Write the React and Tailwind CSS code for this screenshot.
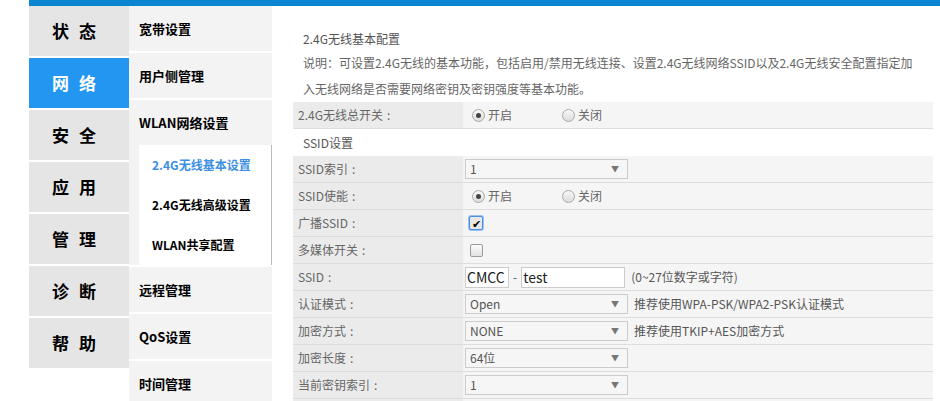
import React from "react";

const navItems = ["状态", "网络", "安全", "应用", "管理", "诊断", "帮助"];

const Radio = ({ checked }) => (
  <span className="w-[13px] h-[13px] rounded-full border border-[#a9a9a9] bg-gradient-to-b from-[#f8f8f8] to-[#dcdcdc] flex items-center justify-center">
    {checked && <span className="w-[5px] h-[5px] rounded-full bg-[#444]" />}
  </span>
);

const RadioPair = () => (
  <div className="flex items-center">
    <div className="flex items-center ml-[7px] w-[90px]">
      <Radio checked />
      <span className="ml-[3px]">开启</span>
    </div>
    <div className="flex items-center">
      <Radio />
      <span className="ml-[3px]">关闭</span>
    </div>
  </div>
);

const Select = ({ value, arrow = true }) => (
  <div className="w-[163px] h-[20px] border border-[#cccccc] bg-[#f6f6f6] flex items-center justify-between pl-[4px] pr-[8px] text-[#555]">
    <span>{value}</span>
    {arrow && <span className="text-[8px] text-[#777]">▼</span>}
  </div>
);

const Row = ({ label, children }) => (
  <div className="flex h-[27px] border-b border-[#dddddd]">
    <div className="w-[170px] bg-[#ebebeb] pl-[5px] flex items-center">
      {label && (
        <>
          <span>{label}</span>
          <span className="ml-[4px]">:</span>
        </>
      )}
    </div>
    <div className="flex-1 bg-[#f5f5f5] flex items-center pl-[2px]">{children}</div>
  </div>
);

export default function App() {
  return (
    <div className="w-[940px] h-[401px] overflow-hidden bg-white text-[12px]" style={{ fontFamily: '"Noto Sans CJK SC", "Noto Sans", sans-serif' }}>
      <div className="ml-[29px] h-[6px] bg-[#0986cf]" />
      <div className="flex">
        {/* left nav */}
        <div className="ml-[29px] w-[100px] flex flex-col gap-[2px]">
          {navItems.map((n) => (
            <div
              key={n}
              className={`h-[50px] flex items-center gap-[10px] pl-[23px] text-[17px] font-bold ${n === "网络" ? "bg-[#2296f1] text-white" : "bg-[#e5e5e5] text-black"}`}
            >
              <span>{n[0]}</span>
              <span>{n[1]}</span>
            </div>
          ))}
        </div>

        {/* second column */}
        <div className="w-[143px] flex flex-col gap-[2px] text-[13px] font-bold text-black">
          <div className="h-[45px] bg-[#f3f3f3] flex items-center pl-[10px]">宽带设置</div>
          <div className="h-[45px] bg-[#f3f3f3] flex items-center pl-[10px]">用户侧管理</div>
          <div className="bg-[#f3f3f3]">
            <div className="h-[45px] flex items-center pl-[10px]">WLAN网络设置</div>
            <div className="ml-[10px] h-[120px] bg-white border-r border-[#bbbbbb] flex flex-col text-[12px]">
              <div className="h-[40px] flex items-center pl-[13px] text-[#3d8fe0]">2.4G无线基本设置</div>
              <div className="h-[40px] flex items-center pl-[13px]">2.4G无线高级设置</div>
              <div className="h-[40px] flex items-center pl-[13px]">WLAN共享配置</div>
            </div>
          </div>
          <div className="h-[45px] bg-[#f3f3f3] flex items-center pl-[10px]">远程管理</div>
          <div className="h-[45px] bg-[#f3f3f3] flex items-center pl-[10px]">QoS设置</div>
          <div className="h-[45px] bg-[#f3f3f3] flex items-center pl-[10px]">时间管理</div>
        </div>

        {/* main */}
        <div className="ml-[21px] w-[640px] pt-[22px] text-[#666]">
          <div className="pl-[10px] h-[22px] leading-[22px] text-[#555]">2.4G无线基本配置</div>
          <div className="pl-[10px] leading-[26px] whitespace-nowrap text-[#666]">
            说明：可设置2.4G无线的基本功能，包括启用/禁用无线连接、设置2.4G无线网络SSID以及2.4G无线安全配置指定加
            <br />
            入无线网络是否需要网络密钥及密钥强度等基本功能。
          </div>

          <Row label="2.4G无线总开关">
            <RadioPair />
          </Row>
          <div className="h-[27px] flex items-center pl-[10px] text-[#555]">SSID设置</div>
          <Row label="SSID索引">
            <Select value="1" />
          </Row>
          <Row label="SSID使能">
            <RadioPair />
          </Row>
          <Row label="广播SSID">
            <span className="ml-[4px] w-[14px] h-[14px] rounded-[2px] border border-[#4a8fe0] ring-1 ring-[#9cc3f0] bg-[#e8e8e8] flex items-center justify-center text-[11px] leading-none text-black">
              ✔
            </span>
          </Row>
          <Row label="多媒体开关">
            <span className="ml-[5px] w-[13px] h-[13px] rounded-[2px] border border-[#9a9a9a] bg-gradient-to-b from-[#fbfbfb] to-[#e2e2e2]" />
          </Row>
          <Row label="SSID">
            <div className="w-[44px] h-[21px] border border-[#cccccc] bg-white flex items-center pl-[1px] text-[14px] text-[#222]">CMCC</div>
            <span className="mx-[4px] text-[#555]">-</span>
            <div className="w-[104px] h-[21px] border border-[#cccccc] bg-white flex items-center pl-[1px] text-[14px] text-[#222]">test</div>
            <span className="ml-[6px] text-[#555]">(0~27位数字或字符)</span>
          </Row>
          <Row label="认证模式">
            <Select value="Open" />
            <span className="ml-[6px] text-[#555]">推荐使用WPA-PSK/WPA2-PSK认证模式</span>
          </Row>
          <Row label="加密方式">
            <Select value="NONE" />
            <span className="ml-[6px] text-[#555]">推荐使用TKIP+AES加密方式</span>
          </Row>
          <Row label="加密长度">
            <Select value="64位" />
          </Row>
          <Row label="当前密钥索引">
            <Select value="1" />
          </Row>
          <Row label="">
            <Select value="" arrow={false} />
          </Row>
        </div>
      </div>
    </div>
  );
}
